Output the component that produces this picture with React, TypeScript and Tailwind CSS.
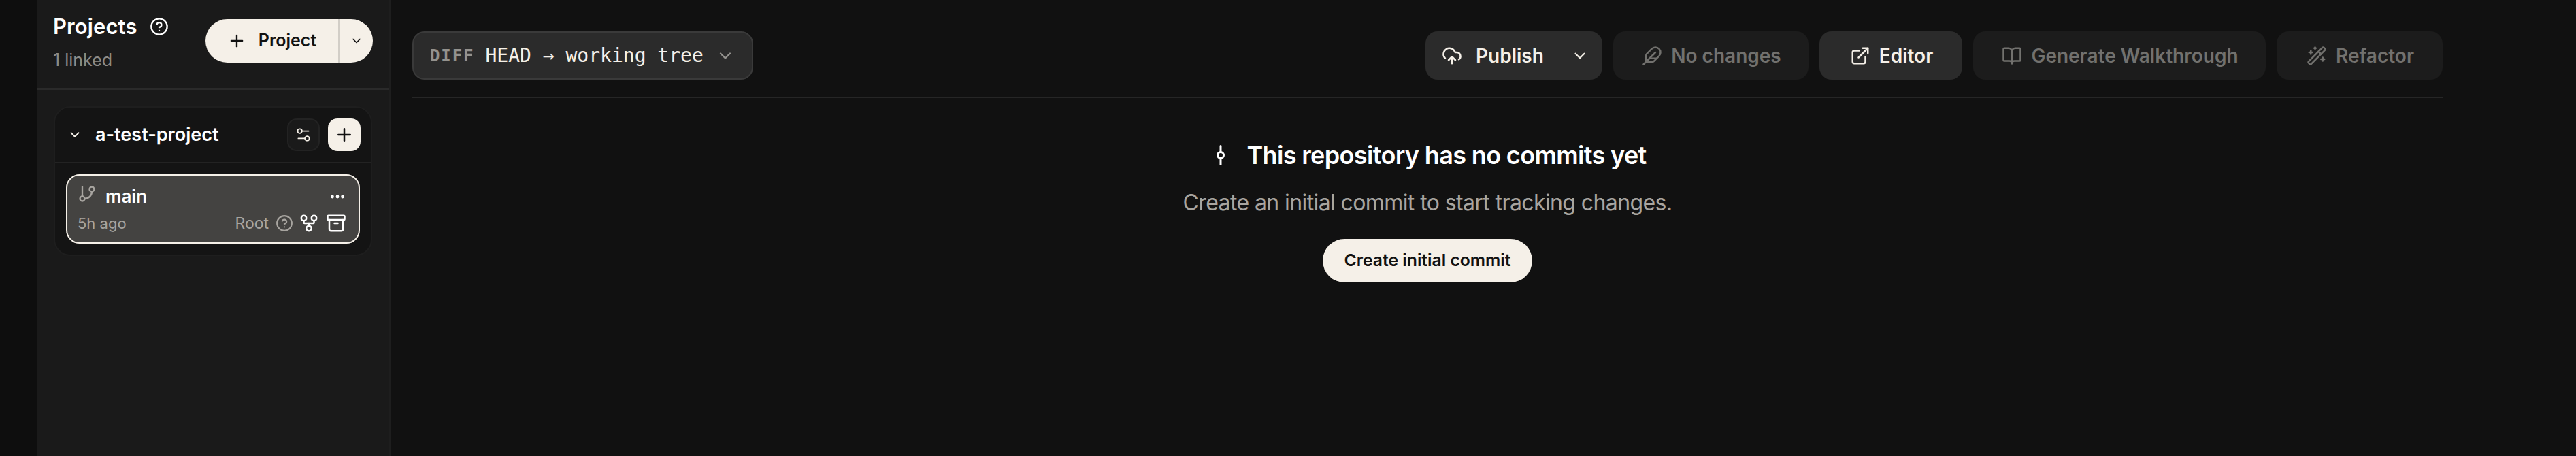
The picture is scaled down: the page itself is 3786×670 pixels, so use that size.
import {
  Archive,
  BookOpen,
  ChevronDown,
  CircleHelp,
  CloudUpload,
  Ellipsis,
  ExternalLink,
  Feather,
  GitBranch,
  GitCommitVertical,
  GitFork,
  Plus,
  Settings2,
  WandSparkles,
} from "lucide-react";

function ToolButton({
  icon: Icon,
  label,
  width,
  active,
}: {
  icon: typeof Feather;
  label: string;
  width: string;
  active?: boolean;
}) {
  return (
    <button
      className={`flex h-[71px] items-center justify-center gap-[13px] rounded-[18px] pl-[2px] text-[28px] font-semibold ${width} ${
        active ? "bg-[#2b2b2b] text-[#f5f0e8]" : "bg-[#1c1c1c] text-[#72716e]"
      }`}
    >
      <Icon className="size-[30px]" strokeWidth={2} />
      {label}
    </button>
  );
}

function Sidebar() {
  return (
    <aside className="flex w-[520px] shrink-0 flex-col border-r-2 border-[#1e1e1e] bg-[#1a1a1a]">
      <div className="flex h-[132px] items-start justify-between border-b-2 border-[#2a2a2a] pl-[24px] pr-[24px] pt-[19px]">
        <div>
          <div className="flex items-center gap-[18px] text-[31px] leading-[40px] font-semibold tracking-[0.1px] text-white">
            Projects
            <CircleHelp className="size-[28px]" strokeWidth={2} />
          </div>
          <div className="mt-[13px] text-[25px] leading-[32px] text-[#8d8b87]">1 linked</div>
        </div>
        <div className="mt-[9px] flex h-[64px] w-[246px] rounded-full bg-[#f5f0e8] text-[#111111]">
          <div className="flex w-[197px] items-center justify-center gap-[18px] border-r-2 border-[#d2cec7] text-[25px] font-semibold">
            <Plus className="size-[28px]" strokeWidth={2} />
            Project
          </div>
          <div className="flex flex-1 items-center justify-center">
            <ChevronDown className="size-[20px]" strokeWidth={2} />
          </div>
        </div>
      </div>
      <div className="pl-[25px] pr-[25px] pt-[24px]">
        <div className="rounded-[24px] border-2 border-[#1e1e1e] bg-[#141414]">
          <div className="flex h-[82px] items-center border-b-2 border-[#232323] pl-[18px] pr-[15px]">
            <ChevronDown className="size-[22px] text-[#f5f0e8]" strokeWidth={2} />
            <span className="ml-[19px] flex-1 text-[27px] font-semibold text-white">a-test-project</span>
            <div className="flex size-[48px] items-center justify-center rounded-[14px] border-2 border-[#232323] bg-[#1a1a1a] text-[#f5f0e8]">
              <Settings2 className="size-[26px]" strokeWidth={1.75} />
            </div>
            <div className="ml-[12px] flex size-[48px] items-center justify-center rounded-[14px] bg-[#f5f0e8] text-[#111111]">
              <Plus className="size-[30px]" strokeWidth={2} />
            </div>
          </div>
          <div className="px-[16px] py-[16px]">
            <div className="flex h-[102px] flex-col justify-center gap-[6px] rounded-[20px] border-2 border-[#f5f0e8] bg-[#444341] pl-[15px] pr-[18px]">
              <div className="flex items-center">
                <GitBranch className="size-[28px] -translate-y-[4px] text-[#a8a5a0]" strokeWidth={2} />
                <span className="ml-[13px] flex-1 text-[26px] leading-[36px] font-semibold text-white">main</span>
                <Ellipsis className="size-[26px] text-white" strokeWidth={2.5} />
              </div>
              <div className="flex items-center text-[22px] leading-[30px] text-[#a8a5a0]">
                <span className="flex-1">5h ago</span>
                <span className="text-[23px]">Root</span>
                <CircleHelp className="ml-[10px] size-[26px]" strokeWidth={2} />
                <GitFork className="ml-[8px] size-[30px] text-white" strokeWidth={2} />
                <Archive className="ml-[10px] size-[30px] text-white" strokeWidth={2} />
              </div>
            </div>
          </div>
        </div>
      </div>
    </aside>
  );
}

export default function App() {
  return (
    <div className="flex h-[670px] w-[3786px] overflow-hidden bg-[#111111] font-['Inter',sans-serif]">
      <div className="w-[54px] shrink-0 bg-[#0e0e0e]" />
      <Sidebar />
      <main className="flex flex-1 flex-col pl-[32px] pr-[196px]">
        <div className="flex h-[144px] items-start justify-between border-b-2 border-[#262626] pt-[46px]">
          <button className="flex h-[71px] w-[501px] items-center rounded-[18px] border-2 border-[#3a3a3a] bg-[#2b2b2b] pl-[24px] font-['DejaVu_Sans_Mono',monospace]">
            <span className="text-[24px] font-semibold tracking-[0.08em] text-[#94928e]">DIFF</span>
            <span className="ml-[16px] text-[28px] text-[#f5f0e8]">HEAD → working tree</span>
            <ChevronDown className="ml-[18px] size-[28px] text-[#94928e]" strokeWidth={2} />
          </button>
          <div className="flex gap-[16px]">
            <button className="flex h-[71px] w-[260px] items-center rounded-[18px] bg-[#2b2b2b] pl-[24px] text-[28px] font-semibold text-[#f5f0e8]">
              <CloudUpload className="size-[30px]" strokeWidth={2} />
              <span className="ml-[20px] flex-1 text-left">Publish</span>
              <ChevronDown className="mr-[20px] size-[26px]" strokeWidth={2} />
            </button>
            <ToolButton icon={Feather} label="No changes" width="w-[287px]" />
            <ToolButton icon={ExternalLink} label="Editor" width="w-[210px]" active />
            <ToolButton icon={BookOpen} label="Generate Walkthrough" width="w-[430px]" />
            <ToolButton icon={WandSparkles} label="Refactor" width="w-[244px]" />
          </div>
        </div>
        <div className="flex flex-col items-center pt-[60px]">
          <div className="flex items-center gap-[20px] text-[36px] leading-[48px] font-semibold tracking-[-0.65px] text-white">
            <GitCommitVertical className="size-[36px]" strokeWidth={2} />
            This repository has no commits yet
          </div>
          <p className="mt-[24px] text-[32px] leading-[44px] tracking-[-0.6px] text-[#a8a5a0]">
            Create an initial commit to start tracking changes.
          </p>
          <button className="mt-[31px] flex h-[64px] w-[308px] items-center justify-center rounded-full bg-[#f5f0e8] text-[24.7px] font-semibold text-[#111111]">
            Create initial commit
          </button>
        </div>
      </main>
    </div>
  );
}
